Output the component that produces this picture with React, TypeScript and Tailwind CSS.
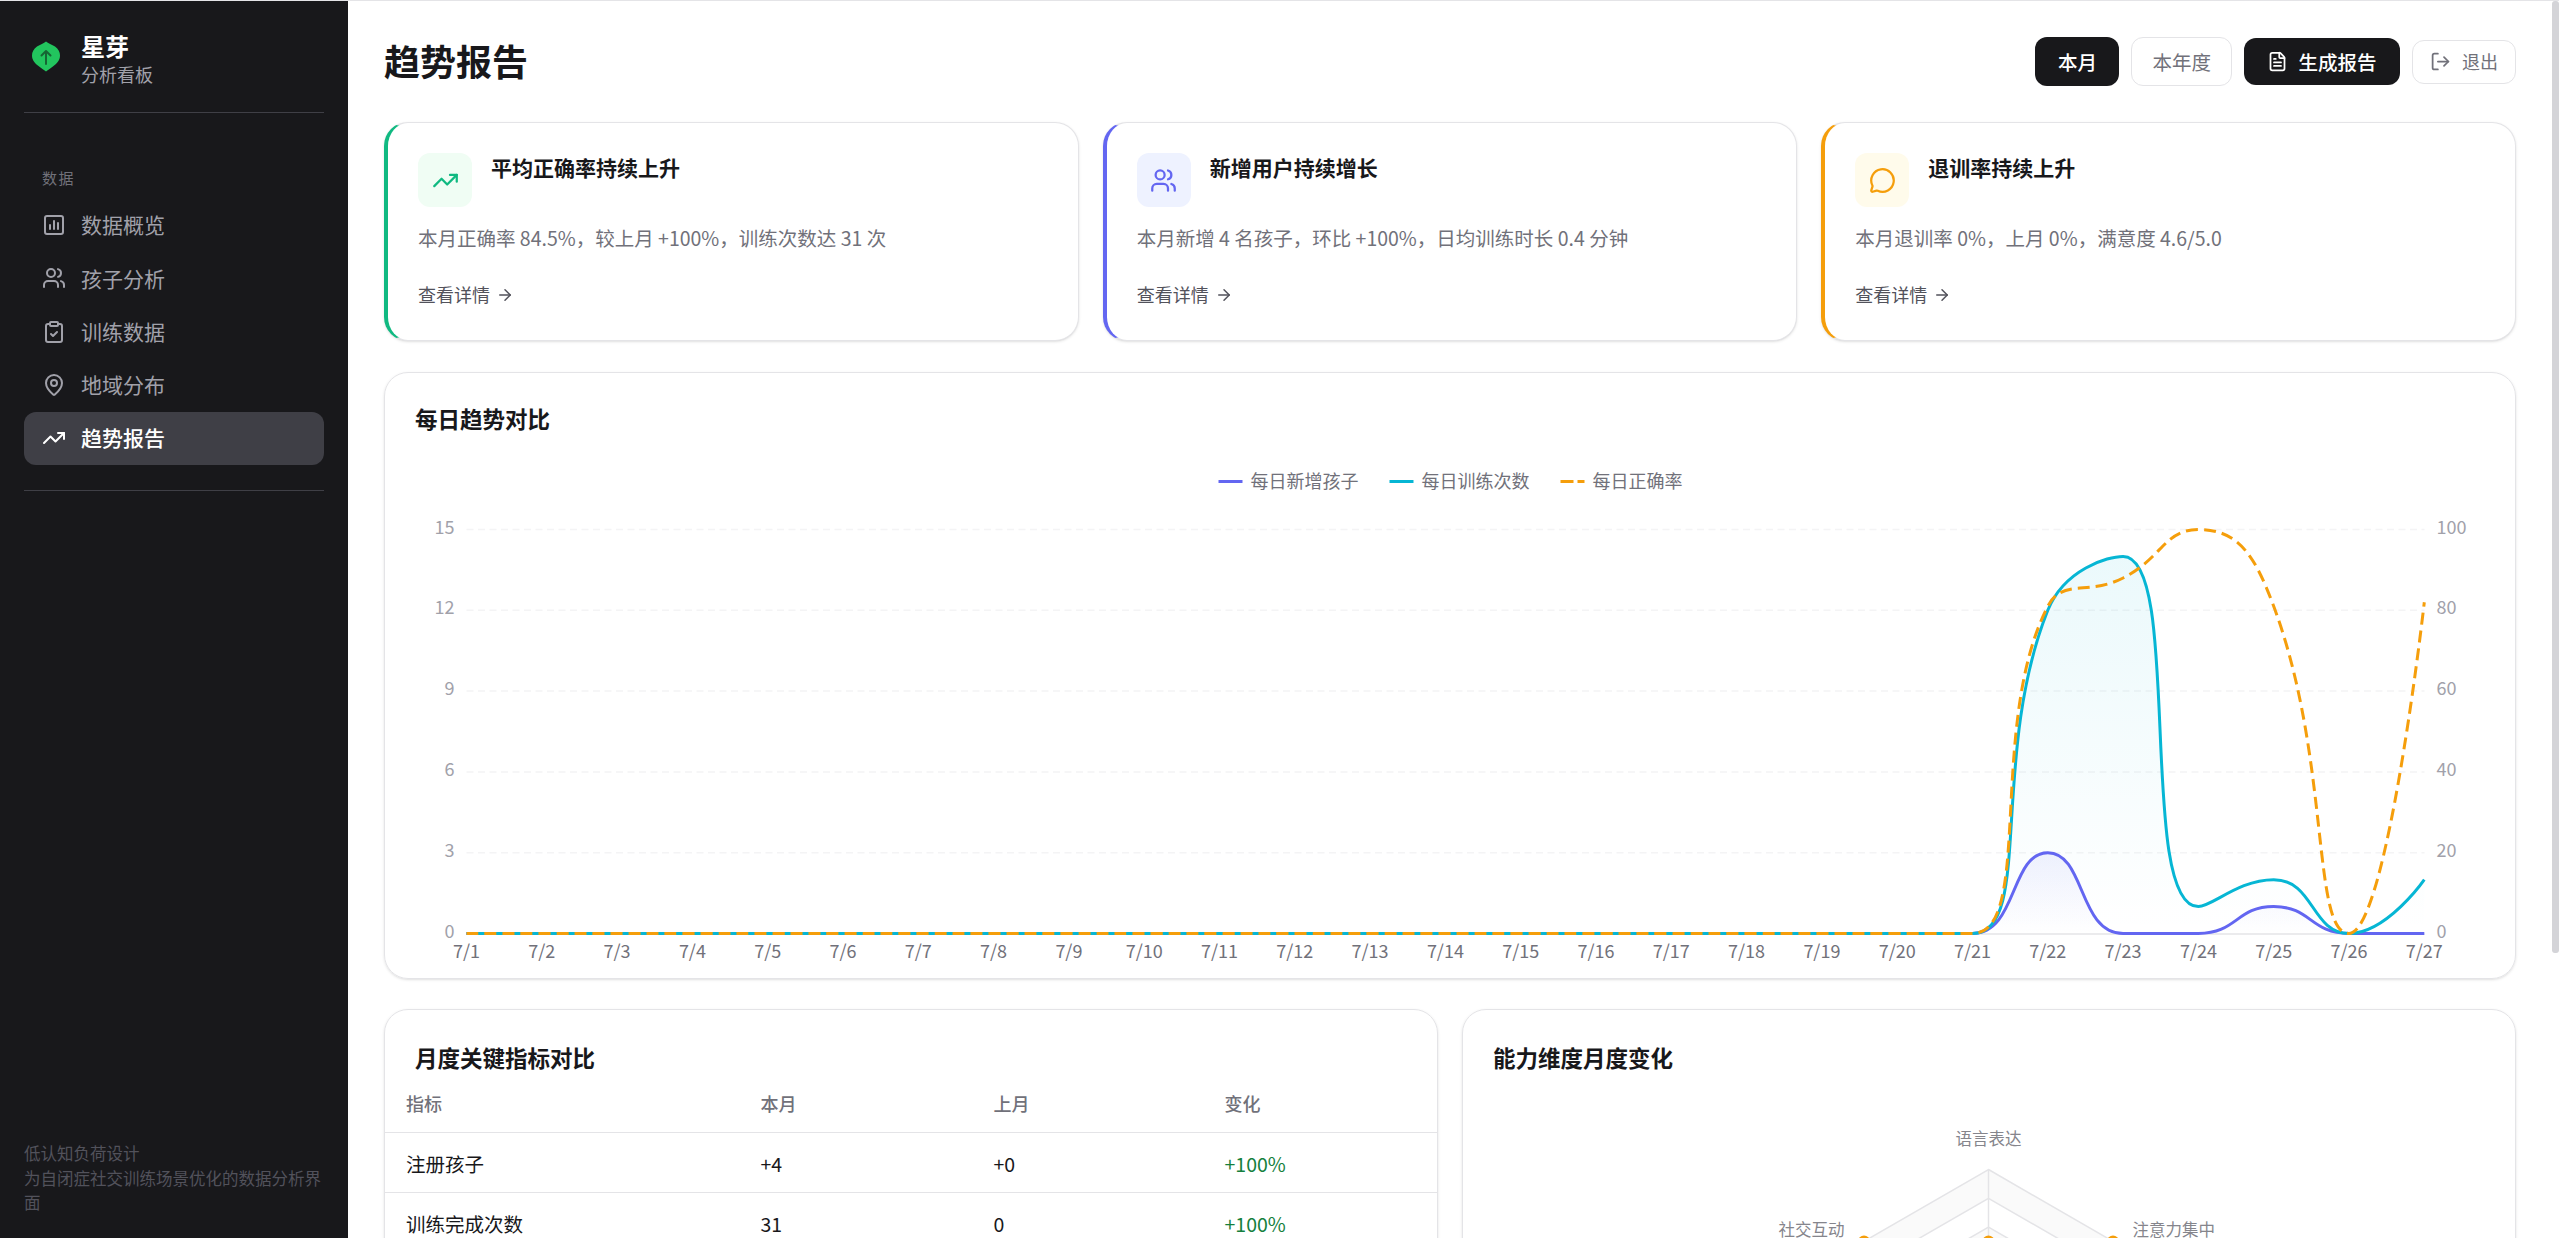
import { ArrowRight, ClipboardCheck, FileText, LogOut, MapPin, MessageCircle, TrendingUp, Users } from "lucide-react";
import type { ReactNode } from "react";

type Pt = [number, number];

const days = Array.from({ length: 27 }, (_, i) => `7/${i + 1}`);
const xAt = (i: number) => 467 + 75.3 * i;
const yLeft = (v: number) => 934 - (v * 404) / 15;
const yRight = (v: number) => 934 - v * 4.04;

const withTail = (tail: number[]) => [...Array(21).fill(0), ...tail] as number[];
const newKids = withTail([3, 0, 0, 1, 0, 0]);
const sessions = withTail([12, 14, 1, 2, 0, 2]);
const accuracy = withTail([81, 88, 100, 81, 0, 82]);

// same control point rule as the chart library's smooth lines
const smoothPath = (pts: Pt[], smooth = 0.5) => {
  const clamp = (v: number, a: number, b: number) => Math.max(Math.min(v, Math.max(a, b)), Math.min(a, b));
  const before: Pt[] = pts.map((p) => [p[0], p[1]]);
  const after: Pt[] = pts.map((p) => [p[0], p[1]]);
  pts.forEach((p, i) => {
    const prev = pts[Math.max(i - 1, 0)];
    const next = pts[Math.min(i + 1, pts.length - 1)];
    const lenPrev = Math.hypot(p[0] - prev[0], p[1] - prev[1]);
    const lenNext = Math.hypot(next[0] - p[0], next[1] - p[1]);
    if (!lenPrev || !lenNext) return;
    const ratio = lenNext / (lenNext + lenPrev);
    const vx = next[0] - prev[0];
    const vy = next[1] - prev[1];
    let ax = clamp(p[0] + vx * smooth * ratio, p[0], next[0]);
    let ay = clamp(p[1] + vy * smooth * ratio, p[1], next[1]);
    const bx = clamp(p[0] - (ax - p[0]) * (lenPrev / lenNext), p[0], prev[0]);
    const by = clamp(p[1] - (ay - p[1]) * (lenPrev / lenNext), p[1], prev[1]);
    ax = p[0] + (p[0] - bx) * (lenNext / lenPrev);
    ay = p[1] + (p[1] - by) * (lenNext / lenPrev);
    before[i] = [bx, by];
    after[i] = [ax, ay];
  });
  let d = `M${pts[0][0]} ${pts[0][1]}`;
  for (let i = 1; i < pts.length; i++) {
    d += `C${after[i - 1][0]} ${after[i - 1][1]} ${before[i][0]} ${before[i][1]} ${pts[i][0]} ${pts[i][1]}`;
  }
  return d;
};

const toPts = (data: number[], y: (v: number) => number): Pt[] => data.map((v, i) => [xAt(i), y(v)]);
const kidsPath = smoothPath(toPts(newKids, yLeft));
const sessionsPath = smoothPath(toPts(sessions, yLeft));
const accuracyPath = smoothPath(toPts(accuracy, yRight));
const closeArea = (d: string) => `${d}L${xAt(26)} 934L${xAt(0)} 934Z`;

const ChartBoxIcon = () => (
  <svg width="24" height="24" viewBox="0 0 24 24" fill="none" stroke="currentColor" strokeWidth="2" strokeLinecap="round" strokeLinejoin="round">
    <rect x="3" y="3" width="18" height="18" rx="2" />
    <path d="M8 16v-4M12 16V8M16 16v-6" />
  </svg>
);

const Logo = () => (
  <svg width="28" height="31" viewBox="0 0 28 31" className="shrink-0">
    <path d="M14 .5C16 2.500 20 3.500 23 5.500 26.500 8 28 11 28 14.500 28 19 25 22.500 21.500 25 19 27 16 29 14 30.500 12 29 9 27 6.500 25 3 22.500 0 19 0 14.500 0 11 1.500 8 5 5.500 8 3.500 12 2.500 14 .5Z" fill="#22c55e" />
    <path d="M14 23V10M9.500 14.500 14 10l4.500 4.500" fill="none" stroke="#166534" strokeWidth="2" strokeLinecap="round" strokeLinejoin="round" />
  </svg>
);

const navItems: { label: string; icon: ReactNode; active?: boolean }[] = [
  { label: "数据概览", icon: <ChartBoxIcon /> },
  { label: "孩子分析", icon: <Users size={24} /> },
  { label: "训练数据", icon: <ClipboardCheck size={24} /> },
  { label: "地域分布", icon: <MapPin size={24} /> },
  { label: "趋势报告", icon: <TrendingUp size={24} />, active: true },
];

const Sidebar = () => (
  <aside className="w-[348px] shrink-0 h-full bg-[#18181b] flex flex-col px-6">
    <div className="h-[112px] shrink-0 border-b-[1.5px] border-[#3f3f46] flex items-center pl-2 gap-[21px]">
      <Logo />
      <div className="flex flex-col pt-[3px]">
        <span className="text-[24px] leading-[32px] font-bold text-white">星芽</span>
        <span className="text-[18px] leading-[24px] text-[#a1a1aa]">分析看板</span>
      </div>
    </div>
    <div className="pt-[54px] pb-[25px] border-b-[1.5px] border-[#3f3f46]">
      <div className="pl-[18px] mb-[10px] text-[15px] leading-[22px] tracking-[1.5px] text-[#71717a]">数据</div>
      {navItems.map((item) => (
        <div
          key={item.label}
          className={
            item.active
              ? "h-[53.25px] flex items-center gap-[15px] px-[18px] pb-[1px] rounded-[12px] bg-[#3f3f46] text-white text-[21px] font-medium"
              : "h-[53.25px] flex items-center gap-[15px] px-[18px] pb-[1px] rounded-[12px] text-[#a1a1aa] text-[21px]"
          }
        >
          {item.icon}
          <span>{item.label}</span>
        </div>
      ))}
    </div>
    <p className="mt-auto pb-[23px] text-[16.5px] leading-[24.75px] text-[#52525b]">
      低认知负荷设计
      <br />
      为自闭症社交训练场景优化的数据分析界面
    </p>
  </aside>
);

const Header = () => (
  <header className="h-[61px] flex items-center justify-between mb-[30px]">
    <h1 className="pb-[3px] text-[36px] font-bold text-[#18181b]">趋势报告</h1>
    <div className="flex items-center gap-3">
      <button className="h-[49px] px-[22.5px] rounded-[12px] bg-[#18181b] text-white text-[19.5px] font-medium">本月</button>
      <button className="h-[49px] px-[20px] rounded-[12px] border-[1.5px] border-[#e4e4e7] text-[#71717a] text-[19.5px]">本年度</button>
      <button className="h-[47px] px-[23.5px] rounded-[12px] bg-[#18181b] text-white text-[19.5px] font-medium flex items-center gap-[10px]">
        <FileText size={21} />
        生成报告
      </button>
      <button className="h-[44px] px-[17px] rounded-[12px] border-[1.5px] border-[#e4e4e7] text-[#71717a] text-[18px] flex items-center gap-[11px]">
        <LogOut size={21} />
        退出
      </button>
    </div>
  </header>
);

const insights = [
  {
    title: "平均正确率持续上升",
    text: "本月正确率 84.5%，较上月 +100%，训练次数达 31 次",
    icon: <TrendingUp size={27} className="text-[#10b981]" />,
    edge: "border-l-[#10b981]",
    tint: "bg-[#f0fdf4]",
  },
  {
    title: "新增用户持续增长",
    text: "本月新增 4 名孩子，环比 +100%，日均训练时长 0.4 分钟",
    icon: <Users size={27} className="text-[#6366f1]" />,
    edge: "border-l-[#6366f1]",
    tint: "bg-[#eef2ff]",
  },
  {
    title: "退训率持续上升",
    text: "本月退训率 0%，上月 0%，满意度 4.6/5.0",
    icon: <MessageCircle size={27} className="text-[#f59e0b]" />,
    edge: "border-l-[#f59e0b]",
    tint: "bg-[#fffbeb]",
  },
];

const InsightCard = ({ title, text, icon, edge, tint }: (typeof insights)[number]) => (
  <div className={`h-[218.500px] rounded-[24px] border-[1.5px] border-l-[4.5px] border-[#e4e4e7] ${edge} shadow-sm p-[30px] bg-white`}>
    <div className="flex items-start gap-[19px]">
      <div className={`w-[54px] h-[54px] rounded-[12px] flex items-center justify-center ${tint}`}>{icon}</div>
      <div className="text-[21px] leading-[28px] font-semibold text-[#18181b]">{title}</div>
    </div>
    <p className="mt-[15.5px] text-[19.5px] leading-[30px] text-[#71717a]">{text}</p>
    <div className="mt-[28.5px] h-[27px] flex items-center gap-[6px] text-[18px] text-[#52525b]">
      查看详情
      <ArrowRight size={18} />
    </div>
  </div>
);

const legend: { label: string; x: number; color: string; dash?: string }[] = [
  { label: "每日新增孩子", x: 1219, color: "#6366f1" },
  { label: "每日训练次数", x: 1390, color: "#06b6d4" },
  { label: "每日正确率", x: 1561, color: "#f59e0b", dash: "13 4 7" },
];

const TrendChart = () => (
  <svg width="2129" height="541.500" viewBox="385.500 436.500 2129 541.500" className="block">
    <defs>
      <linearGradient id="kidsFill" x1="0" y1="0" x2="0" y2="1">
        <stop offset="0" stopColor="#6366f1" stopOpacity="0.09" />
        <stop offset="1" stopColor="#6366f1" stopOpacity="0" />
      </linearGradient>
      <linearGradient id="sessionsFill" x1="0" y1="0" x2="0" y2="1">
        <stop offset="0" stopColor="#06b6d4" stopOpacity="0.08" />
        <stop offset="1" stopColor="#06b6d4" stopOpacity="0" />
      </linearGradient>
    </defs>
    {legend.map((l) => (
      <g key={l.label}>
        <line x1={l.x} x2={l.x + 24} y1="482" y2="482" stroke={l.color} strokeWidth="3" strokeDasharray={l.dash} />
        <text x={l.x + 32} y="480.500" fontSize="18" fill="#71717a" dominantBaseline="central">
          {l.label}
        </text>
      </g>
    ))}
    {[0, 3, 6, 9, 12, 15].map((v, i) => (
      <g key={v}>
        {v > 0 && <line x1="467" x2="2425" y1={yLeft(v)} y2={yLeft(v)} stroke="#f4f4f5" strokeWidth="1.5" strokeDasharray="7 4.500" />}
        <text x="455" y={yLeft(v) - 4} fontSize="18" fill="#a1a1aa" textAnchor="end" dominantBaseline="central">
          {v}
        </text>
        <text x="2437" y={yLeft(v) - 4} fontSize="18" fill="#a1a1aa" dominantBaseline="central">
          {i * 20}
        </text>
      </g>
    ))}
    <line x1="467" x2="2425" y1="934.500" y2="934.500" stroke="#e4e4e7" strokeWidth="1.5" />
    {days.map((d, i) => (
      <text key={d} x={xAt(i)} y="950.500" fontSize="18" fill="#71717a" textAnchor="middle" dominantBaseline="central">
        {d}
      </text>
    ))}
    <path d={closeArea(kidsPath)} fill="url(#kidsFill)" />
    <path d={closeArea(sessionsPath)} fill="url(#sessionsFill)" />
    <path d={kidsPath} fill="none" stroke="#6366f1" strokeWidth="3" />
    <path d={sessionsPath} fill="none" stroke="#06b6d4" strokeWidth="3" />
    <path d={accuracyPath} fill="none" stroke="#f59e0b" strokeWidth="3" strokeDasharray="12 6" />
  </svg>
);

const rows = [
  ["注册孩子", "+4", "+0", "+100%"],
  ["训练完成次数", "31", "0", "+100%"],
];

const MetricsTable = () => (
  <table className="w-full table-fixed mt-[3.500px]">
    <colgroup>
      <col className="w-[375.500px]" />
      <col className="w-[233px]" />
      <col className="w-[231px]" />
      <col />
    </colgroup>
    <thead>
      <tr className="h-[55px] border-b-[1.5px] border-[#e4e4e7] text-[18px] text-[#71717a]">
        <th className="pl-[21px] pb-[2px] text-left font-medium">指标</th>
        <th className="pb-[2px] text-left font-medium">本月</th>
        <th className="pb-[2px] text-left font-medium">上月</th>
        <th className="pb-[2px] text-left font-medium">变化</th>
      </tr>
    </thead>
    <tbody>
      {rows.map((r) => (
        <tr key={r[0]} className="h-[60px] border-b-[1.5px] border-[#e4e4e7] text-[19.5px] text-[#18181b]">
          <td className="pl-[21px] pt-[3px]">{r[0]}</td>
          <td className="pt-[3px]">{r[1]}</td>
          <td className="pt-[3px]">{r[2]}</td>
          <td className="pt-[3px] text-[#15803d]">{r[3]}</td>
        </tr>
      ))}
    </tbody>
  </table>
);

const cx = 1989;
const cy = 1314;
const hex = (r: number) =>
  Array.from({ length: 6 }, (_, i) => {
    const a = (i * Math.PI) / 3;
    return `${cx + r * Math.sin(a)},${cy - r * Math.cos(a)}`;
  }).join(" ");

const Radar = () => (
  <svg width="1050" height="330" viewBox="1463.500 1074.500 1050 330" className="block">
    {[144, 115.200, 86.400, 57.600, 28.800].map((r, i) => (
      <polygon key={r} points={hex(r)} fill={i % 2 === 0 ? "#fafafa" : "#ffffff"} stroke="#e4e4e7" strokeWidth="1.5" />
    ))}
    <line x1={cx} x2={cx} y1="1170" y2={cy} stroke="#e4e4e7" strokeWidth="1.5" />
    <text x={cx} y="1138" fontSize="16.5" fill="#85858c" textAnchor="middle" dominantBaseline="central">
      语言表达
    </text>
    <text x="1845" y="1229" fontSize="16.5" fill="#85858c" textAnchor="end" dominantBaseline="central">
      社交互动
    </text>
    <text x="2133" y="1229" fontSize="16.5" fill="#85858c" dominantBaseline="central">
      注意力集中
    </text>
    {[1864.500, cx, 2113.500].map((x) => (
      <circle key={x} cx={x} cy="1242" r="6" fill="#f59e0b" />
    ))}
  </svg>
);

const App = () => (
  <div className="h-screen flex overflow-hidden border-t border-[#e4e4e7] bg-white font-['Noto_Sans_CJK_SC','Noto_Sans',sans-serif]">
    <Sidebar />
    <main className="flex-1 min-w-0 h-full overflow-hidden px-[36px] pt-[30px]">
      <Header />
      <section className="grid grid-cols-3 gap-6">
        {insights.map((card) => (
          <InsightCard key={card.title} {...card} />
        ))}
      </section>
      <section className="mt-[31.500px] rounded-[24px] border-[1.5px] border-[#e4e4e7] shadow-sm">
        <h2 className="px-[30px] pt-[29px] pb-[1px] text-[22.5px] leading-[33px] font-semibold text-[#18181b]">每日趋势对比</h2>
        <TrendChart />
      </section>
      <section className="mt-[30.500px] grid grid-cols-2 gap-6">
        <div className="h-[560px] rounded-[24px] border-[1.5px] border-[#e4e4e7] shadow-sm">
          <h2 className="px-[30px] pt-[31px] text-[22.5px] leading-[33px] font-semibold text-[#18181b]">月度关键指标对比</h2>
          <MetricsTable />
        </div>
        <div className="h-[560px] rounded-[24px] border-[1.5px] border-[#e4e4e7] shadow-sm">
          <h2 className="px-[30px] pt-[31px] text-[22.5px] leading-[33px] font-semibold text-[#18181b]">能力维度月度变化</h2>
          <Radar />
        </div>
      </section>
    </main>
    <div className="w-[7px] shrink-0">
      <div className="h-[952px] rounded-[3px] bg-[#d4d4d8]" />
    </div>
  </div>
);

export default App;
